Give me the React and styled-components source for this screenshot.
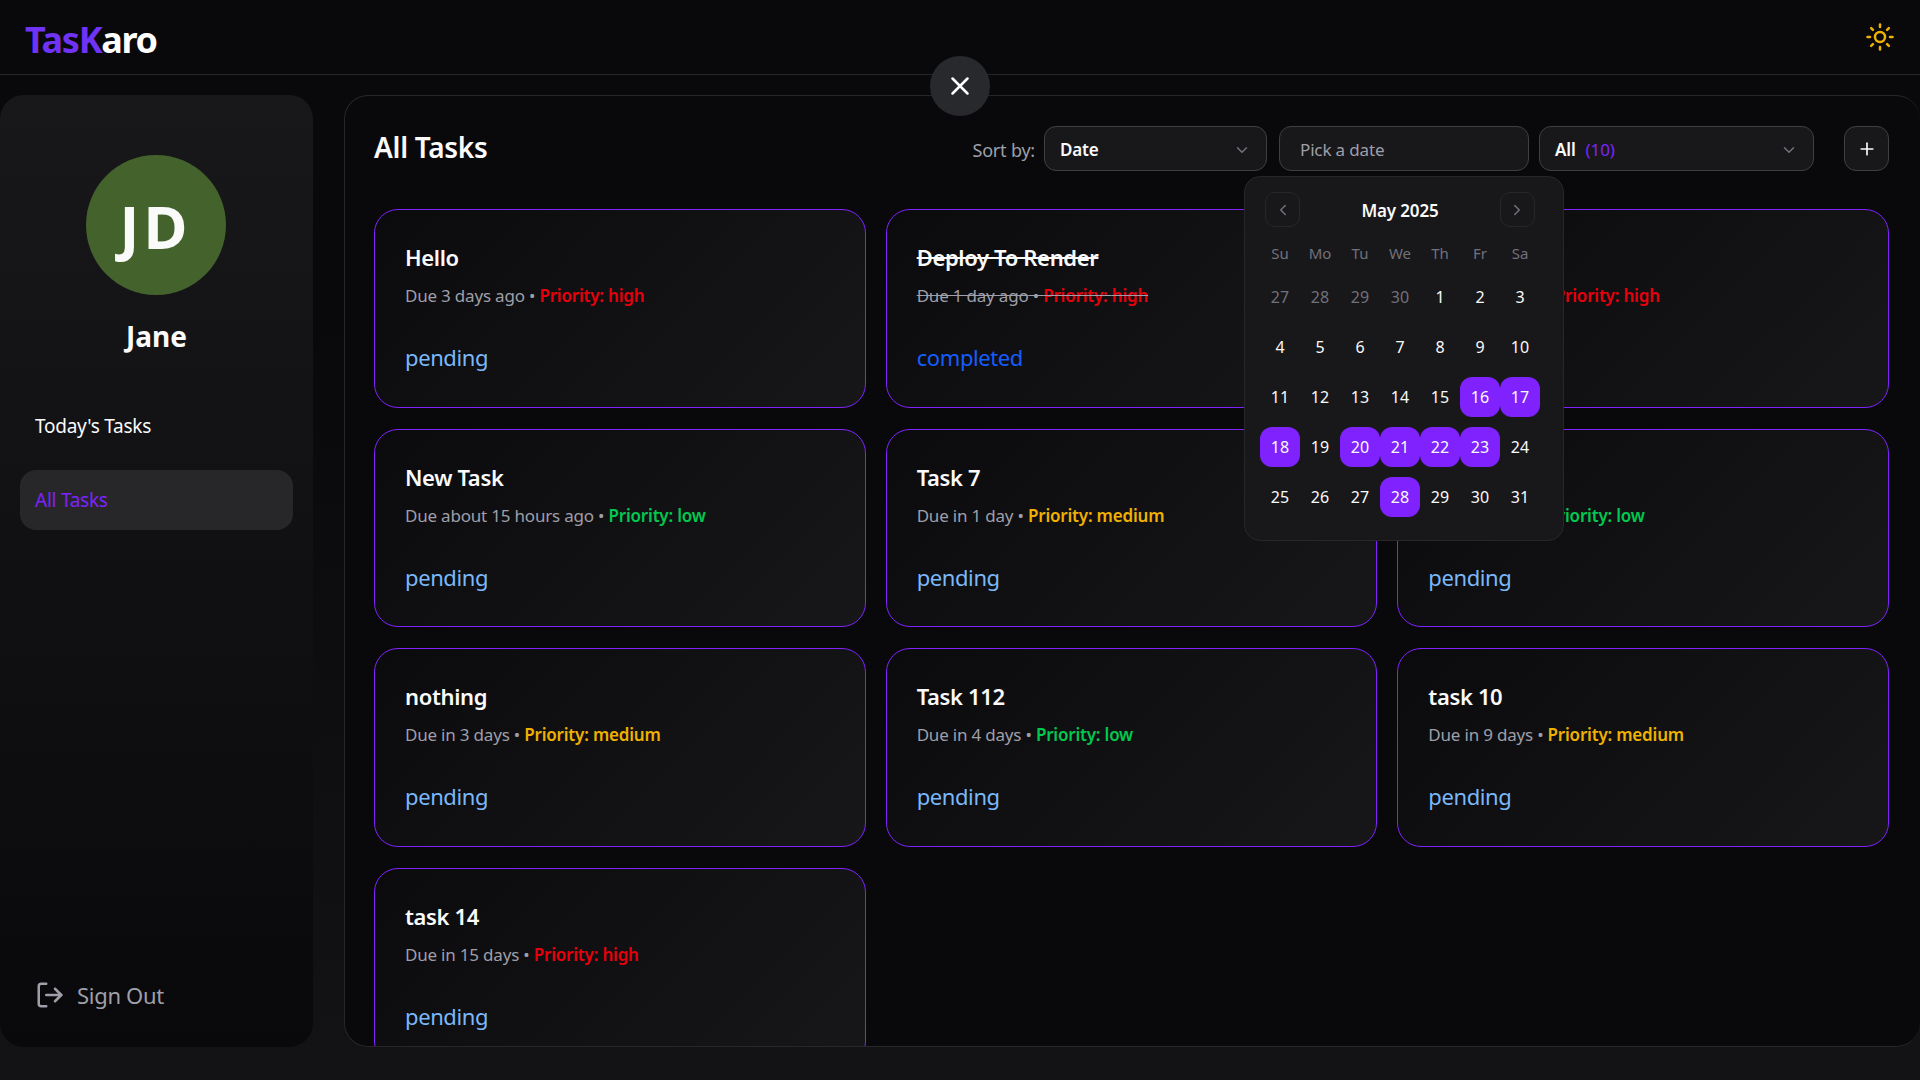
import styled, { createGlobalStyle } from "styled-components";
import { ChevronDown, ChevronLeft, ChevronRight, LogOut, Plus, Sun, X } from "lucide-react";

const violet = "#7f22fe";

const GlobalStyle = createGlobalStyle`
  * { box-sizing: border-box; }
  html, body { margin: 0; height: 100%; overflow: hidden; }
  body {
    font-family: "Noto Sans", "Open Sans", sans-serif;
    color: #fafafa;
    background: #09090b;
  }
`;

const Page = styled.div`
  position: relative;
  height: 100vh;
  display: flex;
  flex-direction: column;
  background: linear-gradient(to bottom, #09090b, #09090b 30%, #131316);
`;

const Header = styled.header`
  height: 75px;
  flex: none;
  display: flex;
  align-items: center;
  justify-content: space-between;
  padding: 0 25px 0 25px;
  border-bottom: 1px solid #27272a;
`;

const Logo = styled.div`
  padding-top: 4px;
  font-size: 36px;
  font-weight: 700;
  letter-spacing: -1.3px;
  color: #fff;
  span { color: #7033f5; }
`;

const Body = styled.div`
  flex: 1;
  min-height: 0;
  display: flex;
  gap: 31px;
  padding: 20px 0 33px;
`;

const Sidebar = styled.aside`
  width: 313px;
  flex: none;
  display: flex;
  flex-direction: column;
  padding: 60px 20px 37px;
  border-radius: 24px;
  background: linear-gradient(to bottom, #18181b, #09090b);
`;

const Avatar = styled.div`
  width: 140px;
  height: 140px;
  align-self: center;
  margin-right: 2px;
  display: flex;
  align-items: center;
  justify-content: center;
  padding-top: 2px;
  border-radius: 50%;
  background: #44622c;
  font-size: 60px;
  font-weight: 700;
  letter-spacing: 4px;
`;

const UserName = styled.div`
  margin-top: 22px;
  text-align: center;
  font-size: 28px;
  font-weight: 700;
`;

const Nav = styled.nav`
  margin-top: 41px;
  display: flex;
  flex-direction: column;
  gap: 14px;
`;

const NavItem = styled.div`
  height: 60px;
  display: flex;
  align-items: center;
  padding: 0 15px;
  border-radius: 16px;
  font-size: 19px;
  letter-spacing: -0.25px;
  color: ${(p) => (p.$active ? violet : "#fafafa")};
  background: ${(p) => (p.$active ? "#27272a" : "transparent")};
`;

const SignOut = styled.div`
  margin-top: auto;
  display: flex;
  align-items: center;
  gap: 12px;
  padding-left: 15px;
  font-size: 22px;
  letter-spacing: -0.3px;
  color: #9f9fa9;
`;

const Main = styled.main`
  flex: 1;
  min-width: 0;
  overflow: hidden;
  padding: 30px 31px 0 29px;
  border: 1px solid #27272a;
  border-right: 0;
  border-radius: 24px;
  background: #09090b;
`;

const TopRow = styled.div`
  height: 45px;
  display: flex;
  align-items: center;
`;

const Title = styled.h1`
  margin: -4px auto 0 0;
  font-size: 28px;
  font-weight: 600;
  letter-spacing: -0.3px;
`;

const SortLabel = styled.span`
  margin-right: 9px;
  padding-top: 2px;
  font-size: 18px;
  color: #9f9fa9;
  letter-spacing: -0.2px;
`;

const Control = styled.div`
  width: ${(p) => p.$w}px;
  height: 45px;
  margin-left: ${(p) => p.$ml || 0}px;
  display: flex;
  align-items: center;
  justify-content: space-between;
  padding: 2px 15px 0;
  border: 1px solid #3f3f46;
  border-radius: 12px;
  background: #18181b;
  font-size: 17px;
  font-weight: 600;
  letter-spacing: -0.15px;
  svg { color: #71717b; }
`;

const PlaceholderText = styled.span`
  padding-left: 5px;
  font-weight: 400;
  color: #9f9fa9;
`;

const Count = styled.span`
  margin-left: 10px;
  font-weight: 400;
  color: ${violet};
`;

const AddButton = styled(Control)`
  justify-content: center;
  padding: 1px 0 0;
  svg { color: #fafafa; }
`;

const Grid = styled.div`
  margin-top: 38px;
  display: grid;
  grid-template-columns: repeat(3, 1fr);
  gap: 21px 20px;
`;

const Card = styled.article`
  height: 198.6px;
  padding: 32px 30px 0;
  border: 1px solid ${violet};
  border-radius: 24px;
  background: linear-gradient(135deg, #0b0b0e, #17171a);
`;

const CardTitle = styled.h3`
  margin: 0;
  font-size: 22px;
  line-height: 30px;
  font-weight: 600;
  letter-spacing: -0.35px;
  text-decoration: ${(p) => (p.$done ? "line-through" : "none")};
`;

const Meta = styled.p`
  margin: 11px 0 0;
  font-size: 17px;
  line-height: 26px;
  letter-spacing: -0.2px;
  color: #9f9fa9;
  text-decoration: ${(p) => (p.$done ? "line-through" : "none")};
`;

const priorityColors = { high: "#e7000b", medium: "#f0b100", low: "#00c950" };

const Priority = styled.span`
  font-weight: 600;
  color: ${(p) => priorityColors[p.$level]};
`;

const Status = styled.div`
  margin-top: 33px;
  font-size: 22px;
  line-height: 30px;
  letter-spacing: -0.4px;
  color: ${(p) => (p.$done ? "#155dfc" : "#7ab8f9")};
`;

const CloseButton = styled.button`
  position: absolute;
  left: 930px;
  top: 56px;
  width: 60px;
  height: 60px;
  display: flex;
  align-items: center;
  justify-content: center;
  padding: 0;
  border: 0;
  border-radius: 50%;
  background: #27292d;
  color: #fff;
`;

const Popover = styled.div`
  position: absolute;
  left: 1244px;
  top: 176px;
  width: 320px;
  height: 365px;
  padding: 15px;
  border: 1px solid #27272a;
  border-radius: 16px;
  background: #18181b;
`;

const CalHeader = styled.div`
  width: 270px;
  margin-left: 5px;
  height: 35px;
  display: flex;
  align-items: center;
  justify-content: space-between;
  font-size: 17px;
  font-weight: 600;
  letter-spacing: -0.15px;
`;

const CalTitle = styled.span`
  padding-top: 2px;
`;

const CalNav = styled.button`
  width: 35px;
  height: 35px;
  display: flex;
  align-items: center;
  justify-content: center;
  padding: 0;
  border: 1px solid #27272a;
  border-radius: 10px;
  background: transparent;
  color: #71717b;
`;

const WeekRow = styled.div`
  margin-top: 10px;
  display: grid;
  grid-template-columns: repeat(7, 40px);
  height: 32px;
  align-items: center;
  justify-items: center;
  font-size: 15px;
  color: #71717b;
`;

const Days = styled.div`
  margin-top: 8px;
  display: grid;
  grid-template-columns: repeat(7, 40px);
  grid-auto-rows: 40px;
  row-gap: 10px;
`;

const Day = styled.div`
  display: flex;
  align-items: center;
  justify-content: center;
  border-radius: 12px;
  font-size: 16px;
  color: ${(p) => (p.$muted ? "#71717b" : "#fafafa")};
  background: ${(p) => (p.$picked ? violet : "transparent")};
`;

const tasks = [
  { title: "Hello", due: "Due 3 days ago", level: "high", status: "pending" },
  { title: "Deploy To Render", due: "Due 1 day ago", level: "high", status: "completed", done: true },
  { title: "Assignment", due: "Due 1 day ago", level: "high", status: "pending" },
  { title: "New Task", due: "Due about 15 hours ago", level: "low", status: "pending" },
  { title: "Task 7", due: "Due in 1 day", level: "medium", status: "pending" },
  { title: "Task 9", due: "Due in 2 days", level: "low", status: "pending" },
  { title: "nothing", due: "Due in 3 days", level: "medium", status: "pending" },
  { title: "Task 112", due: "Due in 4 days", level: "low", status: "pending" },
  { title: "task 10", due: "Due in 9 days", level: "medium", status: "pending" },
  { title: "task 14", due: "Due in 15 days", level: "high", status: "pending" },
];

const weekDays = ["Su", "Mo", "Tu", "We", "Th", "Fr", "Sa"];
const picked = [16, 17, 18, 20, 21, 22, 23, 28];
const leading = [27, 28, 29, 30];
const monthDays = Array.from({ length: 31 }, (_, i) => i + 1);

export default function App() {
  return (
    <Page>
      <GlobalStyle />
      <Header>
        <Logo>
          <span>TasK</span>aro
        </Logo>
        <Sun size={30} color="#f0b100" />
      </Header>
      <Body>
        <Sidebar>
          <Avatar>JD</Avatar>
          <UserName>Jane</UserName>
          <Nav>
            <NavItem>Today's Tasks</NavItem>
            <NavItem $active>All Tasks</NavItem>
          </Nav>
          <SignOut>
            <LogOut size={30} style={{ transform: "scaleX(-1) rotate(180deg)" }} />
            Sign Out
          </SignOut>
        </Sidebar>
        <Main>
          <TopRow>
            <Title>All Tasks</Title>
            <SortLabel>Sort by:</SortLabel>
            <Control $w={223}>
              Date <ChevronDown size={18} />
            </Control>
            <Control $w={250} $ml={12}>
              <PlaceholderText>Pick a date</PlaceholderText>
            </Control>
            <Control $w={275} $ml={10}>
              <span>
                All<Count>(10)</Count>
              </span>
              <ChevronDown size={18} />
            </Control>
            <AddButton $w={45} $ml={30}>
              <Plus size={20} />
            </AddButton>
          </TopRow>
          <Grid>
            {tasks.map((t) => (
              <Card key={t.title}>
                <CardTitle $done={t.done}>{t.title}</CardTitle>
                <Meta $done={t.done}>
                  {t.due} • <Priority $level={t.level}>Priority: {t.level}</Priority>
                </Meta>
                <Status $done={t.done}>{t.status}</Status>
              </Card>
            ))}
          </Grid>
        </Main>
      </Body>
      <CloseButton>
        <X size={30} />
      </CloseButton>
      <Popover>
        <CalHeader>
          <CalNav>
            <ChevronLeft size={18} />
          </CalNav>
          <CalTitle>May 2025</CalTitle>
          <CalNav>
            <ChevronRight size={18} />
          </CalNav>
        </CalHeader>
        <WeekRow>
          {weekDays.map((d) => (
            <span key={d}>{d}</span>
          ))}
        </WeekRow>
        <Days>
          {leading.map((d) => (
            <Day key={"p" + d} $muted>
              {d}
            </Day>
          ))}
          {monthDays.map((d) => (
            <Day key={d} $picked={picked.includes(d)}>
              {d}
            </Day>
          ))}
        </Days>
      </Popover>
    </Page>
  );
}
